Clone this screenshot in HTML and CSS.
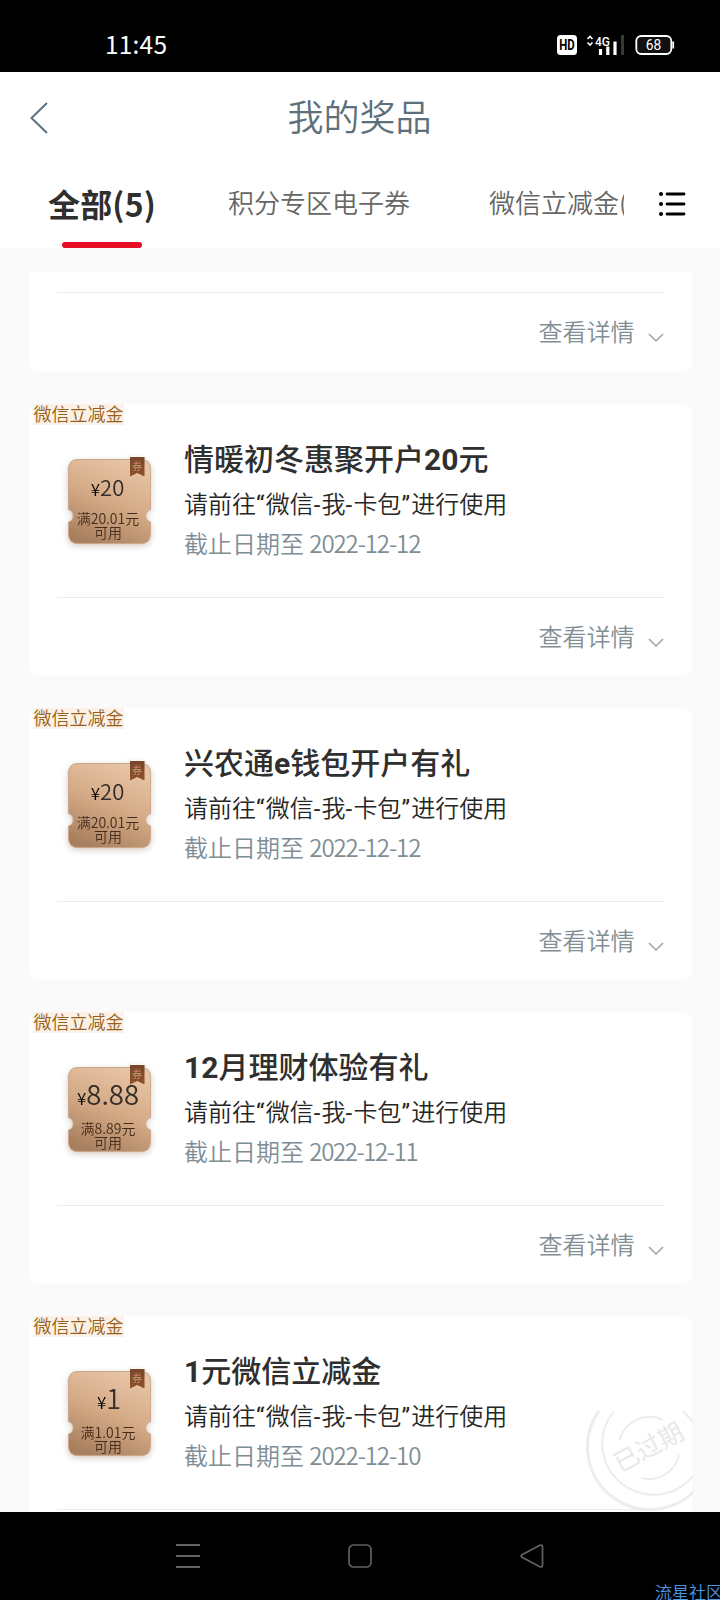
FILE: index.html
```html
<!DOCTYPE html>
<html lang="zh-CN">
<head>
<meta charset="utf-8">
<title>我的奖品</title>
<link rel="stylesheet" href="styles.css">
</head>
<body>
<svg class="defs" width="0" height="0" aria-hidden="true">
  <defs>
    <linearGradient id="bronze" x1="0.7" y1="0" x2="0.3" y2="1">
      <stop offset="0" stop-color="#e8c5a7"/><stop offset="0.5" stop-color="#d4aa86"/><stop offset="1" stop-color="#a9805f"/>
    </linearGradient>
    <linearGradient id="ribbon" x1="0" y1="0" x2="0" y2="1">
      <stop offset="0" stop-color="#78472a"/><stop offset="1" stop-color="#8f5129"/>
    </linearGradient>
    <symbol id="coupon" viewBox="0 0 84 88">
      <path d="M10 2.500H73Q82.500 2.500 82.500 12V52.500A6.500 6.500 0 0 0 82.500 65V77Q82.500 86.500 73 86.500H10Q.5 86.500 .5 77V65A6.500 6.500 0 0 0 .5 52.500V12Q.5 2.500 10 2.500Z" fill="url(#bronze)" stroke="#c9a88e" stroke-width="1"/>
      <path d="M62 0H76.500V19.500L69.250 16L62 19.500Z" fill="url(#ribbon)"/>
    </symbol>
    <symbol id="down" viewBox="0 0 16 10"><path d="M1 1L8 8L15 1" fill="none" stroke="#9ba4a9" stroke-width="1.500"/></symbol>
  </defs>
</svg>
<div class="phone">
  <header class="status">
    <span class="clock">11:45</span>
    <svg class="signals" width="120" height="22" viewBox="0 0 120 22">
      <rect x="0" y="1" width="20" height="20" rx="3.500" fill="#fff"/>
      <text x="10" y="16.200" text-anchor="middle" textLength="15.500" lengthAdjust="spacingAndGlyphs" class="hd">HD</text>
      <path d="M30.500 5L33 2.500L35.500 5M30.500 8.500L33 11L35.500 8.500" fill="none" stroke="#fff" stroke-width="1.600"/>
      <text x="38" y="11.500" textLength="15" lengthAdjust="spacingAndGlyphs" class="net">4G</text>
      <path d="M43.500 15V21M50.800 12.500V21M58 7.500V21" stroke="#fff" stroke-width="3.200"/>
      <path d="M65.500 1V21" stroke="#383838" stroke-width="3"/>
      <rect x="79.300" y="2" width="35" height="18" rx="5" fill="#111" stroke="#fff" stroke-width="1.800"/>
      <path d="M116.200 7.500V14.500" stroke="#fff" stroke-width="1.800"/>
      <text x="96.500" y="16.200" text-anchor="middle" textLength="15.500" lengthAdjust="spacingAndGlyphs" class="level">68</text>
    </svg>
  </header>
  <div class="titlebar">
    <svg class="back" width="18" height="32" viewBox="0 0 18 32"><path d="M17 1L1.500 16L17 31" fill="none" stroke="#5b7282" stroke-width="2"/></svg>
    <h1>我的奖品</h1>
  </div>
  <nav class="tabs">
    <span class="tab active">全部(5)</span>
    <span class="tab second">积分专区电子券</span>
    <span class="tab third">微信立减金(4)</span>
    <svg class="list" width="27" height="26" viewBox="0 0 27 26"><path d="M8 3H25M8 13H25M8 23H25" stroke="#000" stroke-width="2.800" stroke-linecap="round"/><g fill="#000"><circle cx="2" cy="3" r="2"/><circle cx="2" cy="13" r="2"/><circle cx="2" cy="23" r="2"/></g></svg>
  </nav>
  <main class="viewport">
    <section class="card partial">
      <div class="more"><span>查看详情</span><svg class="chev"><use href="#down"/></svg></div>
    </section>

    <section class="card">
      <div class="tag">微信立减金</div>
      <div class="body">
        <div class="coupon"><svg class="art"><use href="#coupon"/></svg><span class="quan">券</span>
          <div class="amount"><small>¥</small>20</div><div class="rule">满20.01元<br>可用</div></div>
        <div class="info"><h2>情暖初冬惠聚开户<b>20</b>元</h2><p class="use">请前往<i>“</i>微信<b>-</b>我<b>-</b>卡包<i>”</i>进行使用</p><p class="date">截止日期至 <span class="d12">2022-12-12</span></p></div>
      </div>
      <div class="more"><span>查看详情</span><svg class="chev"><use href="#down"/></svg></div>
    </section>

    <section class="card">
      <div class="tag">微信立减金</div>
      <div class="body">
        <div class="coupon"><svg class="art"><use href="#coupon"/></svg><span class="quan">券</span>
          <div class="amount"><small>¥</small>20</div><div class="rule">满20.01元<br>可用</div></div>
        <div class="info"><h2>兴农通<b>e</b>钱包开户有礼</h2><p class="use">请前往<i>“</i>微信<b>-</b>我<b>-</b>卡包<i>”</i>进行使用</p><p class="date">截止日期至 <span class="d12">2022-12-12</span></p></div>
      </div>
      <div class="more"><span>查看详情</span><svg class="chev"><use href="#down"/></svg></div>
    </section>

    <section class="card">
      <div class="tag">微信立减金</div>
      <div class="body">
        <div class="coupon"><svg class="art"><use href="#coupon"/></svg><span class="quan">券</span>
          <div class="amount large"><small>¥</small>8.88</div><div class="rule">满8.89元<br>可用</div></div>
        <div class="info"><h2><b>12</b>月理财体验有礼</h2><p class="use">请前往<i>“</i>微信<b>-</b>我<b>-</b>卡包<i>”</i>进行使用</p><p class="date">截止日期至 <span class="d11">2022-12-11</span></p></div>
      </div>
      <div class="more"><span>查看详情</span><svg class="chev"><use href="#down"/></svg></div>
    </section>

    <section class="card">
      <div class="tag">微信立减金</div>
      <div class="body">
        <div class="coupon"><svg class="art"><use href="#coupon"/></svg><span class="quan">券</span>
          <div class="amount one"><small>¥</small>1</div><div class="rule">满1.01元<br>可用</div></div>
        <div class="info"><h2><b>1</b>元微信立减金</h2><p class="use">请前往<i>“</i>微信<b>-</b>我<b>-</b>卡包<i>”</i>进行使用</p><p class="date">截止日期至 <span class="d10">2022-12-10</span></p></div>
      </div>
      <div class="more"></div>
      <svg class="stamp" width="108" height="102" viewBox="0 0 108 102">
        <g fill="none" stroke="#ededed">
          <path d="M17 -4A62 62 0 1 0 113 76" stroke-width="3"/>
          <path d="M29 0A51 51 0 0 0 108 65M98 0L108 11" stroke-width="2"/>
          <path d="M34.500 29A31 31 0 0 1 78 9M94 44A31 31 0 0 1 56 67" stroke-width="2"/>
        </g>
        <text x="64" y="45" text-anchor="middle" transform="rotate(-28 64 37)">已过期</text>
      </svg>
    </section>
  </main>
  <footer class="navbar">
    <svg width="24" height="26" viewBox="0 0 24 26"><path d="M0 2H24M0 13H24M0 24H24" stroke="#626262" stroke-width="2"/></svg>
    <svg width="24" height="24" viewBox="0 0 24 24"><rect x="1" y="1" width="22" height="22" rx="4.500" fill="none" stroke="#626262" stroke-width="1.700"/></svg>
    <svg width="24" height="24" viewBox="0 0 24 24"><path d="M2 10.800L19.800 1.300Q22.500 .5 22.500 3V21Q22.500 23.500 19.800 22.700L2 13.200Q.2 12 2 10.800Z" fill="none" stroke="#626262" stroke-width="1.700"/></svg>
    <span class="community">流星社区</span>
  </footer>
</div>
</body>
</html>
```
FILE: styles.css
```css
* { box-sizing: border-box; }
body { margin: 0; background: #000; font-family: "Noto Sans CJK SC", sans-serif; font-weight: 350; }
h1, h2, p { margin: 0; }
svg { display: block; }
.defs { position: absolute; }
.phone { width: 720px; height: 1600px; overflow: hidden; display: flex; flex-direction: column; }

.status { height: 72px; flex: none; background: #000; color: #fff; display: flex; justify-content: space-between; padding: 34px 43px 0 105px; }
.clock { font: 400 24.5px/20px "Noto Sans CJK SC", sans-serif; letter-spacing: .2px; }
.hd { font: 700 14.500px "Roboto", sans-serif; fill: #000; }
.net { font: 500 13.500px "Roboto", sans-serif; fill: #fff; }
.level { font: 400 14.500px "Roboto", sans-serif; fill: #fff; }

.titlebar { height: 93px; flex: none; background: #fff; display: flex; align-items: flex-start; padding: 30px 0 0 30px; }
h1 { flex: 1; text-align: center; margin: -12px 49px 0 0; font-size: 36px; line-height: 51px; font-weight: 350; color: #5c6f7b; }

.tabs { height: 83px; flex: none; background: #fff; display: flex; align-items: flex-start; padding: 15px 0 0 48px; }
.tab { font-size: 26px; line-height: 43px; color: #666; white-space: nowrap; }
.tab.active { width: 108px; height: 68px; font-size: 32px; line-height: 46px; letter-spacing: .2px; font-weight: 700; color: #2f2f2f; display: flex; flex-direction: column; align-items: center; justify-content: space-between; }
.tab.active::after { content: ""; width: 80px; height: 6px; border-radius: 3px; background: #e60d26; }
.second { margin-left: 72px; }
.third { width: 135px; margin-left: 79px; overflow: hidden; }
.list { margin: 11px 0 0 35px; }

.viewport { height: 1264px; flex: none; background: #fafafa; padding: 24px 28.500px 0 28.500px; overflow: hidden; }
.card { position: relative; height: 272px; margin-bottom: 32px; border-radius: 10px; background: #fff; }
.card.partial { height: 100px; padding-top: 20px; border-radius: 0 0 10px 10px; }
.tag { width: 90px; height: 21px; margin-left: 5px; background: #fbf1e8; color: #985f19; font-size: 18px; line-height: 19px; white-space: nowrap; }
.body { height: 172px; display: flex; padding: 32px 0 0 39.500px; }
.coupon { position: relative; width: 84px; height: 88px; text-align: center; color: #432c1c; filter: drop-shadow(0 2px 3px rgba(100, 70, 40, .28)); }
.art { position: absolute; inset: 0; width: 84px; height: 88px; }
.quan { position: absolute; left: 62px; top: 2px; width: 14px; font-size: 10px; line-height: 13px; color: #c79b77; }
.amount { position: relative; margin-right: 5px; padding-top: 16px; font-size: 22px; line-height: 27px; color: #342d28; }
.amount small { font-size: 17px; color: #000; }
.amount.large { font-size: 27.500px; margin-right: 4px; padding-top: 15px; margin-bottom: 10px; }
.amount.one { font-size: 27px; margin-right: 2px; padding-top: 15px; margin-bottom: 10px; }
.rule { position: relative; margin: 9px 4px 0 0; font-size: 14px; line-height: 14px; }
.info { margin-left: 32px; white-space: nowrap; margin-top: -21px; }
h2 { font: 500 30px/47px "Roboto", "Noto Sans CJK SC", sans-serif; color: #2f2f2f; }
h2 b { font-weight: 700; }
.use { font-size: 24px; line-height: 40px; color: #262626; }
.use i, .use b { font: 400 24px "Roboto", sans-serif; letter-spacing: 1.200px; }
.date { font-size: 24px; line-height: 40px; color: #7f8d94; }
.date span { letter-spacing: -1.100px; }
.date .d11 { letter-spacing: -1.400px; }
.more { height: 79px; margin: 0 28px; border-top: 1px solid #ececec; display: flex; justify-content: flex-end; padding-top: 20px; color: #828e94; font-size: 24px; line-height: 36px; }
.chev { width: 16px; height: 10px; margin: 20px 0 0 13px; }
.stamp { position: absolute; right: -1px; top: 95px; }
.stamp text { font-size: 25px; font-weight: 400; fill: #e8e8e8; }

.navbar { position: relative; height: 88px; flex: none; background: #000; display: flex; justify-content: space-between; align-items: center; padding: 0 176px; }
.community { position: absolute; left: 655px; top: 68px; font-size: 17px; line-height: 24px; color: #4d98e2; white-space: nowrap; }
```
